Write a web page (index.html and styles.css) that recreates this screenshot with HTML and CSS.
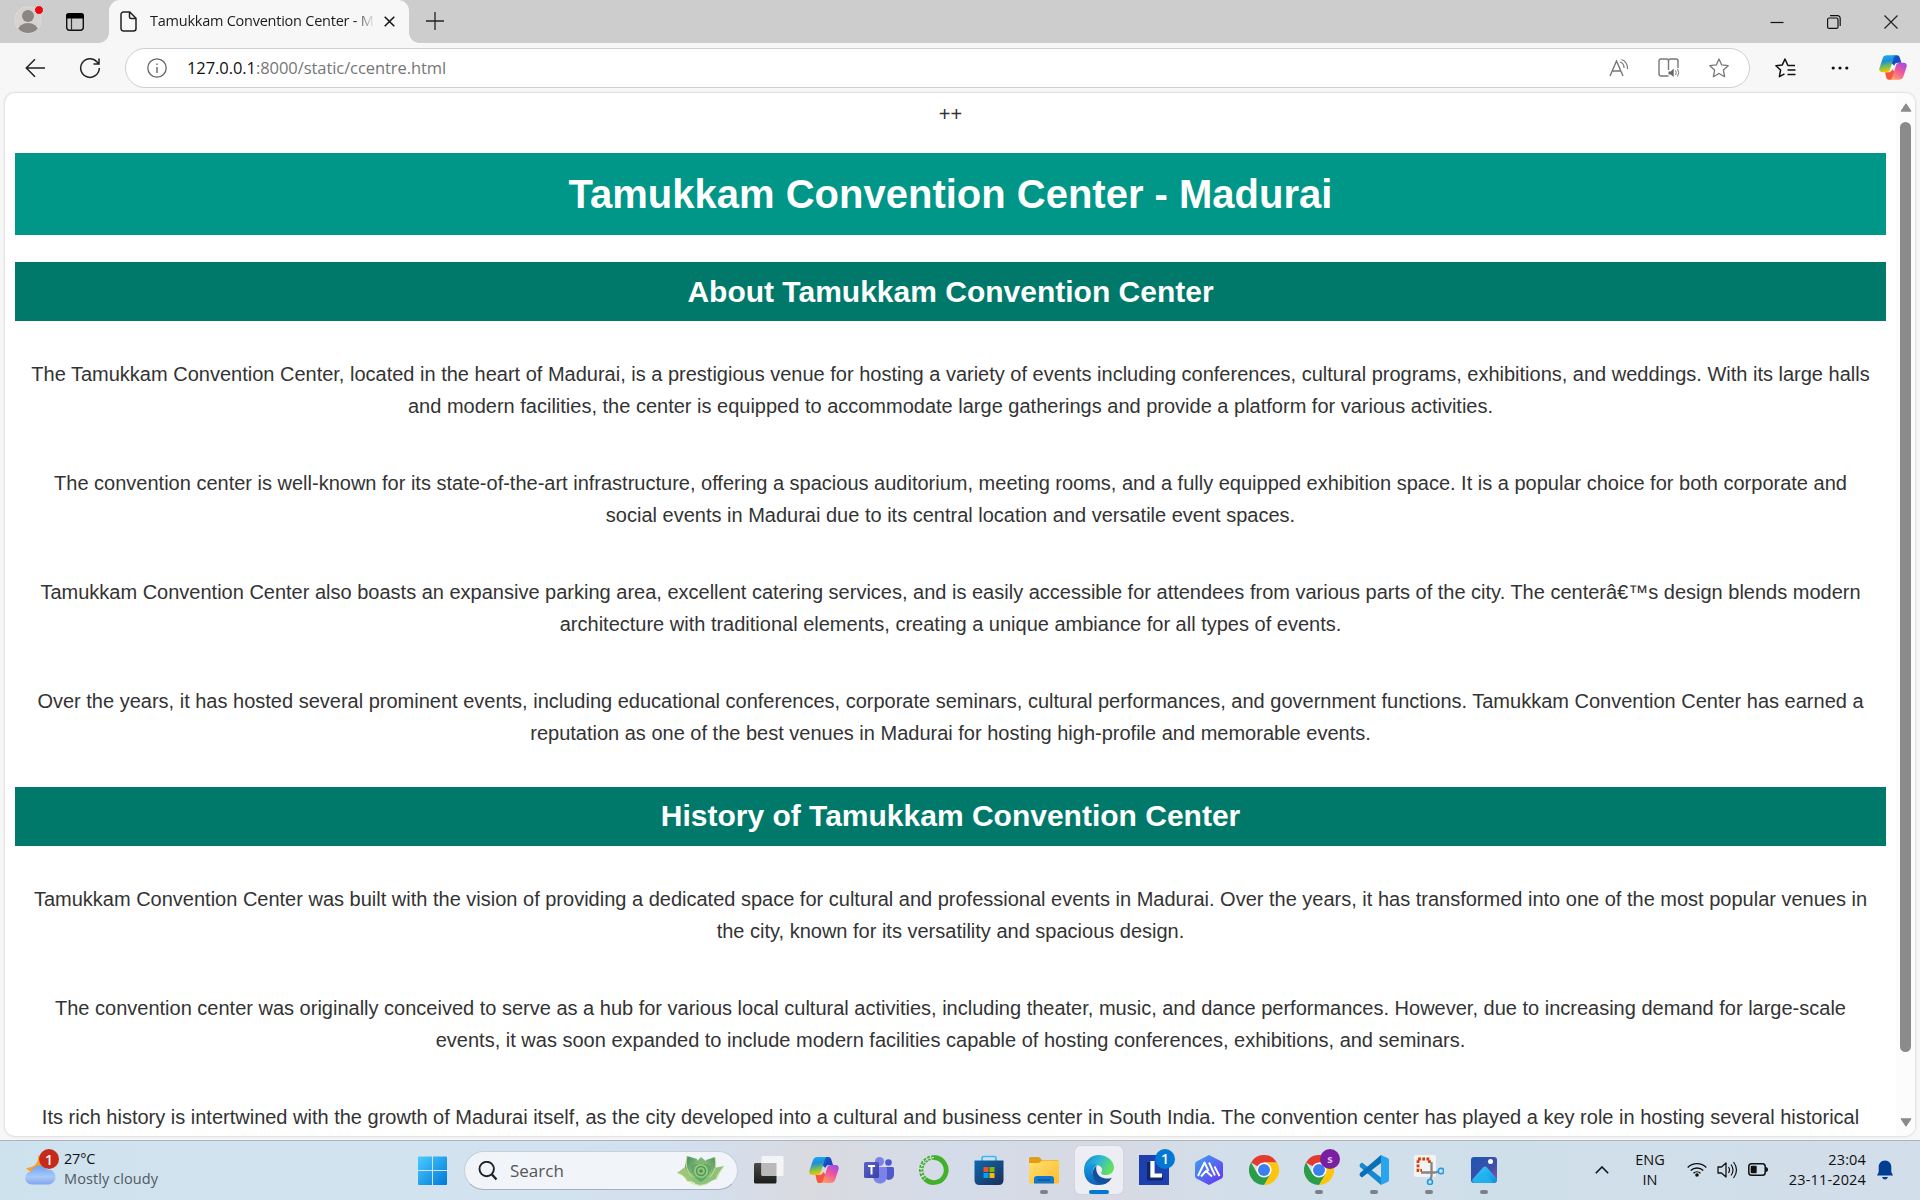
FILE: index.html
```
<!DOCTYPE html>
<html lang="en">
<head>
<meta charset="utf-8">
<title>Tamukkam Convention Center - Madurai</title>
<link rel="stylesheet" href="styles.css">
</head>
<body>
<svg class="defs" width="0" height="0">
  <defs>
    <linearGradient id="cpA" x1="0" y1="0" x2="0.2" y2="1"><stop offset="0" stop-color="#18b4f0"/><stop offset=".4" stop-color="#1f8ddb"/><stop offset=".7" stop-color="#6fbf5a"/><stop offset="1" stop-color="#f5c400"/></linearGradient>
    <linearGradient id="cpB" x1="0.8" y1="0" x2="0.2" y2="1"><stop offset="0" stop-color="#a04be8"/><stop offset=".45" stop-color="#f0559c"/><stop offset="1" stop-color="#ffa366"/></linearGradient>
    <linearGradient id="cpC" x1="0" y1="0" x2="1" y2="1"><stop offset="0" stop-color="#0a62c8"/><stop offset="1" stop-color="#2238c4"/></linearGradient>
    <linearGradient id="win" x1="0" y1="0" x2="1" y2="1"><stop offset="0" stop-color="#4ccbff"/><stop offset="1" stop-color="#0078d7"/></linearGradient>
    <linearGradient id="store" x1="0" y1="0" x2="1" y2="1"><stop offset="0" stop-color="#0b67ae"/><stop offset="1" stop-color="#1e2f5b"/></linearGradient>
    <linearGradient id="folder" x1="0" y1="0" x2="1" y2="1"><stop offset="0" stop-color="#ffdf70"/><stop offset="1" stop-color="#fdbd2c"/></linearGradient>
    <linearGradient id="edgeG" x1="0" y1="0" x2="1" y2=".4"><stop offset="0" stop-color="#1480cc"/><stop offset=".5" stop-color="#2bb5dc"/><stop offset="1" stop-color="#63e060"/></linearGradient>
    <linearGradient id="edgeB" x1="0" y1="0" x2="0" y2="1"><stop offset="0" stop-color="#1b9de2"/><stop offset="1" stop-color="#0d62b8"/></linearGradient>
    <linearGradient id="hex" x1="0" y1="0" x2="1" y2="1"><stop offset="0" stop-color="#3da5f0"/><stop offset="1" stop-color="#6a2ff5"/></linearGradient>
    <linearGradient id="photo" x1="0" y1="0" x2="1" y2="1"><stop offset="0" stop-color="#1c56b5"/><stop offset=".6" stop-color="#3f4fa8"/><stop offset="1" stop-color="#9a4f9e"/></linearGradient>
    <linearGradient id="hill" x1="0" y1="0" x2="1" y2="1"><stop offset="0" stop-color="#3ad2fc"/><stop offset="1" stop-color="#0c8fe0"/></linearGradient>
    <linearGradient id="cloud" x1="0" y1="0" x2="0" y2="1"><stop offset="0" stop-color="#6ea2ee"/><stop offset=".6" stop-color="#a9c9f9"/><stop offset="1" stop-color="#7fa4ee"/></linearGradient>
    <linearGradient id="dark" x1="0" y1="0" x2="0" y2="1"><stop offset="0" stop-color="#4a4a48"/><stop offset="1" stop-color="#1c1c1b"/></linearGradient>
    <linearGradient id="teams" x1="0" y1="0" x2="1" y2="1"><stop offset="0" stop-color="#5a62c9"/><stop offset="1" stop-color="#3b3fa5"/></linearGradient>
    <linearGradient id="leafA" x1="0" y1="0" x2="1" y2="1"><stop offset="0" stop-color="#3f8a58"/><stop offset="1" stop-color="#a5cf85"/></linearGradient>
    <linearGradient id="leafB" x1="1" y1="0" x2="0" y2="1"><stop offset="0" stop-color="#4f9560"/><stop offset="1" stop-color="#a5cf85"/></linearGradient>
    <symbol id="copilot" viewBox="0 0 30 28">
      <path d="M16 1h3.500c1.500 0 2.300 1 2.800 2.600L24 9h-4c-2 0-3 1-3.600 3L13 9z" fill="url(#cpC)"/>
      <path d="M14 27h-3.500c-1.500 0-2.300-1-2.800-2.600L6.500 19h4c2 0 3-1 3.600-3l3 3z" fill="#f4573b"/>
      <path d="M8.500 1H19c-2 0-2.800 1.500-3.400 3.400l-3.800 11.800C11.200 18 10.200 19 8 19H3.500C.8 19-.2 17 .5 14.500l3.300-10C4.500 2.200 6 1 8.500 1z" fill="url(#cpA)"/>
      <path d="M21.500 27H11c2 0 2.800-1.500 3.400-3.400l3.800-11.800C18.800 10 19.800 9 22 9h4.500c2.700 0 3.700 2 3 4.500l-3.300 10c-.7 2.300-2.200 3.500-4.700 3.500z" fill="url(#cpB)"/>
    </symbol>
    <symbol id="chrome" viewBox="0 0 30 30">
      <path d="M15 15 2 7.500A15 15 0 0 1 28 7.500L15 7.500z" fill="#e33b2e"/>
      <path d="M15 15 15 7.500H28A15 15 0 0 1 15 30L21.500 18.700z" fill="#fdc60d"/>
      <path d="M15 15 21.500 18.700 15 30A15 15 0 0 1 2 7.500L8.500 18.700z" fill="#2a9d48"/>
      <circle cx="15" cy="15" r="7.500" fill="#fff"/><circle cx="15" cy="15" r="6" fill="#3a7ff2"/>
    </symbol>
  </defs>
</svg>
<div class="screen">
  <header class="titlebar">
    <div class="lead">
      <svg width="30" height="30" viewBox="0 0 30 30"><defs><clipPath id="av"><circle cx="14" cy="16" r="13"/></clipPath></defs><circle cx="14" cy="16" r="13.300" fill="#d5d2cf" stroke="#dedede" stroke-width=".8"/><g clip-path="url(#av)" fill="#8b8683"><circle cx="14" cy="12" r="6"/><ellipse cx="14" cy="26.500" rx="10" ry="7.500"/></g><circle cx="25" cy="6" r="4.500" fill="#e60c12" stroke="#dedede"/></svg>
      <svg width="20" height="20" viewBox="0 0 20 20"><rect x="1.700" y="1.700" width="16.600" height="16.600" rx="3" fill="none" stroke="#111" stroke-width="1.400"/><path d="M1 6.500V4a3 3 0 0 1 3-3h12a3 3 0 0 1 3 3v2.500z" fill="#000"/><path d="M6.500 6v12" stroke="#333" stroke-width="1.200"/></svg>
    </div>
    <div class="tab">
      <svg width="17" height="21" viewBox="0 0 17 21"><path d="M3.500 1h6.300L16 7.300v10.200a2.500 2.500 0 0 1-2.500 2.500h-10A2.500 2.500 0 0 1 1 17.500v-14A2.500 2.500 0 0 1 3.500 1zM9.500 1v5a1.500 1.500 0 0 0 1.500 1.500h5" fill="none" stroke="#222" stroke-width="1.500"/></svg>
      <span class="tab-title">Tamukkam Convention Center - Madurai</span>
      <svg class="tab-close" width="11" height="11" viewBox="0 0 11 11"><path d="M.7.700l9.600 9.600M10.300.700.700 10.300" stroke="#111" stroke-width="1.500"/></svg>
    </div>
    <svg class="newtab" width="18" height="18" viewBox="0 0 18 18"><path d="M9 0v18M0 9h18" stroke="#222" stroke-width="1.300"/></svg>
    <div class="winctl">
      <svg width="14" height="14" viewBox="0 0 14 14"><path d="M.5 7.500h13" stroke="#111" stroke-width="1.200"/></svg>
      <svg width="14" height="14" viewBox="0 0 14 14"><rect x=".6" y="3" width="10.400" height="10.400" rx="1.500" fill="none" stroke="#111" stroke-width="1.200"/><path d="M3 .7h7.500a2.700 2.700 0 0 1 2.700 2.700V11" fill="none" stroke="#111" stroke-width="1.200"/></svg>
      <svg width="14" height="14" viewBox="0 0 14 14"><path d="M.5.500l13 13M13.500.500l-13 13" stroke="#222" stroke-width="1.200"/></svg>
    </div>
  </header>
  <nav class="toolbar">
    <svg class="back" width="21" height="20" viewBox="0 0 21 20"><path d="M20 10H1.500M10 1.300 1.300 10l8.700 8.700" fill="none" stroke="#222" stroke-width="1.500"/></svg>
    <svg class="reload" width="22" height="22" viewBox="0 0 22 22"><path d="M20.300 11A9.300 9.300 0 1 1 17.800 4.700L20 7M20 1.500V7h-5.500" fill="none" stroke="#222" stroke-width="1.500"/></svg>
    <div class="omnibox">
      <svg width="20" height="20" viewBox="0 0 20 20"><circle cx="10" cy="10" r="9.200" fill="none" stroke="#666" stroke-width="1.300"/><path d="M10 9v6M10 5.500v1.500" stroke="#666" stroke-width="1.400"/></svg>
      <span class="url"><b>127.0.0.1</b>:8000/static/ccentre.html</span>
      <div class="omni-actions">
        <svg width="20" height="20" viewBox="0 0 20 20"><path d="M1 18 7.500 3 14 18M3.200 13h8.600" fill="none" stroke="#777" stroke-width="1.400"/><path d="M11 4a6 6 0 0 1 4 6M12.500 1.500A9 9 0 0 1 18.500 11" fill="none" stroke="#777" stroke-width="1.200"/></svg>
        <svg width="22" height="20" viewBox="0 0 22 20"><path d="M10.500 18H3a2 2 0 0 1-2-2V3a2 2 0 0 1 2-2h5.500a2 2 0 0 1 2 2v9M10.500 3a2 2 0 0 1 2-2H18a2 2 0 0 1 2 2v7" fill="none" stroke="#777" stroke-width="1.400"/><path d="M10.500 13.500h2.200l3-3v8.500l-3-2.500h-2.200z" fill="#666"/><path d="M17.500 12.500q1.500 2 0 4.500M19.500 11q2.500 3.500 0 7.500" fill="none" stroke="#777"/></svg>
        <svg width="20" height="20" viewBox="0 0 20 20"><path d="M10 1 12.700 6.900 19.200 7.700 14.400 12.100 15.600 18.700 10 15.500 4.400 18.700 5.600 12.100.800 7.700 7.300 6.900z" fill="none" stroke="#777" stroke-width="1.300" stroke-linejoin="round"/></svg>
      </div>
    </div>
    <svg class="favs" width="21" height="20" viewBox="0 0 21 20"><path d="M20 7.500H12.900L10 1 7.300 6.900.900 7.700 5.600 12.100 4.400 18.700 9.500 15.800" fill="none" stroke="#111" stroke-width="1.500" stroke-linejoin="round"/><path d="M12.500 12h8M12.500 16.500h8" stroke="#111" stroke-width="1.500"/></svg>
    <svg class="more" width="18" height="4" viewBox="0 0 18 4"><g fill="#111"><circle cx="2.200" cy="2" r="1.600"/><circle cx="9" cy="2" r="1.600"/><circle cx="15.800" cy="2" r="1.600"/></g></svg>
    <svg class="cp" width="28" height="27"><use href="#copilot"/></svg>
  </nav>
  <div class="viewport">
    <main class="page">
      ++
      <h1>Tamukkam Convention Center - Madurai</h1>
      <h2>About Tamukkam Convention Center</h2>
      <p>The Tamukkam Convention Center, located in the heart of Madurai, is a prestigious venue for hosting a variety of events including conferences, cultural programs, exhibitions, and weddings. With its large halls and modern facilities, the center is equipped to accommodate large gatherings and provide a platform for various activities.</p>
      <p>The convention center is well-known for its state-of-the-art infrastructure, offering a spacious auditorium, meeting rooms, and a fully equipped exhibition space. It is a popular choice for both corporate and social events in Madurai due to its central location and versatile event spaces.</p>
      <p>Tamukkam Convention Center also boasts an expansive parking area, excellent catering services, and is easily accessible for attendees from various parts of the city. The centerâ€™s design blends modern architecture with traditional elements, creating a unique ambiance for all types of events.</p>
      <p>Over the years, it has hosted several prominent events, including educational conferences, corporate seminars, cultural performances, and government functions. Tamukkam Convention Center has earned a reputation as one of the best venues in Madurai for hosting high-profile and memorable events.</p>
      <h2>History of Tamukkam Convention Center</h2>
      <p>Tamukkam Convention Center was built with the vision of providing a dedicated space for cultural and professional events in Madurai. Over the years, it has transformed into one of the most popular venues in the city, known for its versatility and spacious design.</p>
      <p>The convention center was originally conceived to serve as a hub for various local cultural activities, including theater, music, and dance performances. However, due to increasing demand for large-scale events, it was soon expanded to include modern facilities capable of hosting conferences, exhibitions, and seminars.</p>
      <p>Its rich history is intertwined with the growth of Madurai itself, as the city developed into a cultural and business center in South India. The convention center has played a key role in hosting several historical</p>
    </main>
    <div class="scrollbar">
      <svg width="12" height="9" viewBox="0 0 12 9"><path d="M6 .8 11 8.200H1z" fill="#8b8b8b" stroke="#8b8b8b" stroke-linejoin="round"/></svg>
      <div class="thumb"></div>
      <svg width="12" height="9" viewBox="0 0 12 9"><path d="M6 8.200 11 .8H1z" fill="#8b8b8b" stroke="#8b8b8b" stroke-linejoin="round"/></svg>
    </div>
  </div>
  <footer class="taskbar">
    <div class="weather">
      <svg width="35" height="37" viewBox="0 0 35 37"><path d="M13 6c1 8-4 13-12 13 4 6 15 6 18 0V10z" fill="#f5a32a"/><path d="M7 35.500a6.500 6.500 0 0 1-.5-13A8.500 8.500 0 0 1 22 20.500a7.500 7.500 0 0 1 2 15z" fill="url(#cloud)"/><circle cx="24" cy="10" r="10" fill="#c42b1c"/><text x="24" y="15.500" text-anchor="middle" class="badge-text">1</text></svg>
      <div class="weather-text"><span>27°C</span><span class="muted">Mostly cloudy</span></div>
    </div>
    <div class="cell start"><svg width="30" height="30" viewBox="0 0 30 30"><path d="M0 1.500Q0 .5 1 .5H14V14H0zM15 .5H28q1 0 1 1V14H15zM0 15H14V29H1q-1 0-1-1zM15 15H29V28q0 1-1 1H15z" fill="url(#win)"/></svg></div>
    <div class="search">
      <svg width="20" height="20" viewBox="0 0 20 20"><circle cx="8.700" cy="8" r="7.200" fill="none" stroke="#222" stroke-width="1.900"/><path d="M13.500 13 18.500 18.500" stroke="#222" stroke-width="2.400"/></svg>
      <span>Search</span>
      <svg class="plant" width="48" height="32" viewBox="0 0 48 32">
        <path d="M0 18 8 12 16 14 18 27 10 26Q7 20 0 18z" fill="#9cc777"/>
        <path d="M47 11 37 13 31 18 32 27 39 24Q41 18 47 11z" fill="#8fc274"/>
        <path d="M10 1 20 4 22 14 13 20 8 12z" fill="url(#leafA)"/>
        <path d="M38 2 29 5 26 14 34 20 39 12z" fill="url(#leafB)"/>
        <path d="M24 2 31 8 28 18H20L18 8z" fill="#7db774"/>
        <path d="M12 19 20 23 30 22 36 18Q36 26 30 29L23 30.500Q14 29 12 19z" fill="#8cc47c"/>
        <path d="M13 10Q14 22 24 27 33 22 35 11L29 9H19z" fill="#66a768"/>
        <circle cx="24" cy="16" r="7" fill="#94cb80"/><circle cx="24" cy="16" r="5.200" fill="#4f9358"/><circle cx="24" cy="16" r="3.800" fill="#8fc97c"/><circle cx="24" cy="16" r="1.800" fill="#4b8f55"/>
        <path d="M0 18Q8 20 10 26L18 28M10 1Q7 13 15 22M38 2Q41 13 33 22M47 11Q42 18 39 25M14 28Q24 33 33 27" stroke="#cfe3a0" stroke-width=".9" fill="none"/>
      </svg>
    </div>
    <div class="apps">
    <div class="cell"><svg width="30" height="30" viewBox="0 0 30 30"><rect x="0" y="8" width="22.500" height="20.500" rx="1.500" fill="url(#dark)"/><rect x="7.500" y="1" width="22" height="20" rx="1.500" fill="#f5f5f5"/><path d="M7.500 8h15v13H9q-1.500 0-1.500-1.500z" fill="#b9b9b9"/></svg></div>
    <div class="cell"><svg width="30" height="28"><use href="#copilot"/></svg></div>
    <div class="cell"><svg width="30" height="30" viewBox="0 0 30 30"><circle cx="24.500" cy="7.500" r="3.300" fill="#5059c9"/><circle cx="15.500" cy="6.500" r="4.500" fill="#7b83eb"/><path d="M22 12h6.500q1.500 0 1.500 1.500V19c0 7-8 7-8 4z" fill="#5059c9"/><path d="M9 12h12.500q1.500 0 1.500 1.500V21c0 10-14 10-14 0z" fill="#7b83eb"/><rect x="0" y="7" width="15" height="16" rx="1.500" fill="url(#teams)"/><path d="M4 11h7M7.500 11v8.500" stroke="#fff" stroke-width="2"/></svg></div>
    <div class="cell"><svg width="30" height="30" viewBox="0 0 30 30"><path d="M15 2.500A12.500 12.500 0 1 1 6 24" fill="none" stroke="#43b02a" stroke-width="4.800"/><path d="M15 2.500A12.500 12.500 0 0 0 6 24" fill="none" stroke="#43b02a" stroke-width="4.400" stroke-dasharray="2.600 1.200"/><path d="M15 2.500A12.500 12.500 0 0 0 6 24" fill="none" stroke="#d9dde3" stroke-width="1.100" stroke-dasharray="2.200 1.400"/></svg></div>
    <div class="cell"><svg width="30" height="30" viewBox="0 0 30 30"><path d="M8 6V3q0-1.500 1.500-1.500h11Q22 1.500 22 3v3" fill="none" stroke="#2cc0f2" stroke-width="1.700"/><path d="M.5 5.500h29V25q0 5-5 5h-19q-5 0-5-5z" fill="url(#store)"/><path d="M9.500 12h5v5h-5z" fill="#f25022"/><path d="M15.500 12h5v5h-5z" fill="#7fba00"/><path d="M9.500 18h5v5h-5z" fill="#00a4ef"/><path d="M15.500 18h5v5h-5z" fill="#ffb900"/></svg></div>
    <div class="cell"><svg width="30" height="30" viewBox="0 0 30 30"><path d="M0 3.500Q0 2 1.500 2H10l3 3h15q1.500 0 1.500 1.500V15H0z" fill="#e09f12"/><path d="M0 8h10l3-2.500h17V27q0 1.500-1.500 1.500h-27Q0 28.500 0 27z" fill="url(#folder)"/><path d="M5 28.500V24q0-3 3-3h14q3 0 3 3v4.500z" fill="#1176cc"/><path d="M9 25h12" stroke="#094f96" stroke-width="1.300"/></svg><i class="run"></i></div>
    <div class="cell active"><svg width="30" height="30" viewBox="0 0 30 30"><path d="M0 15C0 6 7 0 15 0s15 6 15 12.500c0 5-4 7.500-8.500 7.500-3.500 0-5-1.300-4-3 1.500-2.500.5-6-4.500-7C7 8.500 1 10 0 15z" fill="url(#edgeG)"/><path d="M0 15C.5 9 8 7 13.500 10 8 13 7 19 11 24c4 4 9 5 12 3.500-5 3.500-12 3-16 1C2.500 26 0 21 0 15z" fill="url(#edgeB)"/><path d="M12.500 11C7.500 14.500 7 21.500 12 26.500c2.500 2.500 6.500 3.600 9.500 2.200 3-1.400 5-3.500 6.300-6C25 24 20 24 16 21.500c-3-2-4.500-6.500-3.500-10.500z" fill="#10509f"/></svg><i class="run wide"></i></div>
    <div class="cell"><svg width="36" height="36" viewBox="0 0 36 36" class="shift"><path d="M0 6h30v30H0z" fill="#1e3fae"/><path d="M9.500 13v17h13v-3" fill="none" stroke="#112764" stroke-width="3"/><path d="M13.500 12v14.500h9.500" fill="none" stroke="#fff" stroke-width="4.200"/><circle cx="26" cy="10" r="10" fill="#0078d4"/><text x="26" y="15" text-anchor="middle" class="badge-text">1</text></svg></div>
    <div class="cell"><svg width="28" height="30" viewBox="0 0 28 30"><path d="M14 0 26.500 6.500Q28 7.500 28 9v12q0 1.500-1.500 2.500L14 30 1.500 23.500Q0 22.500 0 21V9Q0 7.500 1.500 6.500z" fill="url(#hex)"/><path d="M3 21 9.500 7.500 13.500 16M6 21.500l5-5.500 6 5.500M14 7.500l6 13M19.500 11.500l5 9.500" fill="none" stroke="#fff" stroke-width="1.900" stroke-linejoin="round"/></svg></div>
    <div class="cell"><svg width="30" height="30"><use href="#chrome"/></svg></div>
    <div class="cell"><svg width="36" height="36" viewBox="0 0 36 36" class="shift"><use href="#chrome" x="0" y="6" width="30" height="30"/><circle cx="26" cy="10" r="10" fill="#7b1fa2"/><text x="26" y="14" text-anchor="middle" class="s-text">s</text></svg><i class="run"></i></div>
    <div class="cell"><svg width="30" height="30" viewBox="0 0 30 30"><path d="M1 9 3 7.500 22 22.500V30L1 12q-1-1.500 0-3z" fill="#1689d1"/><path d="M1 21 3 22.500 22 8V0L1 18q-1 1.500 0 3z" fill="#0a6fb5"/><path d="M22 0 29 3.300q1 .6 1 1.700v20q0 1.200-1 1.700L22 30z" fill="#29a5ee"/></svg><i class="run"></i></div>
    <div class="cell"><svg width="30" height="30" viewBox="0 0 30 30"><rect width="22" height="22" rx="2" fill="#f3f3f3"/><path d="M15.500 8V4H4v11.500h4" fill="none" stroke="#d83b01" stroke-width="2.800" stroke-dasharray="2.800 1.400"/><path d="M17.500 7v14l-1 3M7 17.500h14l4-1" fill="none" stroke="#858585" stroke-width="2.300"/><circle cx="27" cy="16" r="2.700" fill="none" stroke="#1f9be6" stroke-width="1.600"/><circle cx="16" cy="27" r="2.500" fill="none" stroke="#1f9be6" stroke-width="1.600"/></svg><i class="run"></i></div>
    <div class="cell"><svg width="26" height="26" viewBox="0 0 26 26"><rect width="26" height="26" rx="3" fill="url(#photo)"/><path d="M1 23 12 10.500q2-2 4 0L26 22q0 4-4 4H4q-2.500 0-3-3z" fill="url(#hill)"/><path d="M2 25 14 14l8 12H4z" fill="#23b5f0" opacity=".6"/><circle cx="19.500" cy="4.500" r="2.500" fill="#fff"/></svg><i class="run"></i></div>
    </div>
    <div class="tray">
      <svg class="chev" width="14" height="8" viewBox="0 0 14 8"><path d="M.8 7.200 7 1l6.200 6.200" fill="none" stroke="#111" stroke-width="1.600"/></svg>
      <div class="lang"><span>ENG</span><span>IN</span></div>
      <svg width="20" height="15" viewBox="0 0 20 15"><g fill="none" stroke="#111" stroke-width="1.400"><path d="M.7 5.500a13 13 0 0 1 18.600 0M3.700 8.500a9 9 0 0 1 12.600 0M6.500 11.300a5 5 0 0 1 7 0"/></g><circle cx="10" cy="13" r="1.800" fill="#111"/></svg>
      <svg width="21" height="18" viewBox="0 0 21 18"><path d="M1 6h3.500L9 2v14l-4.500-4H1z" fill="none" stroke="#111" stroke-width="1.300" stroke-linejoin="round"/><path d="M11.500 6q2 3 0 6M14 3.500q4 5.500 0 11M16.500 1q6 8 0 16" fill="none" stroke="#111" stroke-width="1.200"/></svg>
      <svg width="20" height="13" viewBox="0 0 20 13"><rect x=".8" y=".8" width="16.400" height="11.400" rx="2.800" fill="none" stroke="#111" stroke-width="1.500"/><rect x="2.700" y="2.700" width="6" height="7.600" rx="1" fill="#111"/><path d="M17.500 4q2.500 0 2.500 2.500T17.500 9z" fill="#111"/></svg>
      <div class="clock"><span>23:04</span><span>23-11-2024</span></div>
      <svg width="16" height="20" viewBox="0 0 16 20"><path d="M8 .5c4 0 6.300 3 6.300 6.500v5L16 15.500H0L1.700 12V7C1.700 3.500 4 .5 8 .5zM5 17h6q-1 2.500-3 2.500T5 17z" fill="#003e92"/></svg>
    </div>
  </footer>
</div>
</body>
</html>
```
FILE: styles.css
```
* { box-sizing: border-box; }
body { margin: 0; font-family: "Open Sans", "Noto Sans", sans-serif; color: #111; }
svg { display: block; flex: none; }
.screen { width: 1920px; height: 1200px; display: flex; flex-direction: column; overflow: hidden; background: #f7f7f7; }

/* Tab strip */
.titlebar { height: 43px; display: flex; background: #cdcdcd; }
.lead { width: 109px; display: flex; align-items: center; gap: 21px; padding-left: 14px; }
.lead svg:first-child { margin-top: -5px; }
.tab { position: relative; width: 300px; display: flex; align-items: center; padding-left: 11px; background: #f7f7f7; border-radius: 11px 11px 0 0; }
.tab::before, .tab::after { content: ""; position: absolute; bottom: 0; width: 10px; height: 10px; }
.tab::before { left: -10px; background: radial-gradient(circle at 0 0, #cdcdcd 9.500px, #f7f7f7 10px); }
.tab::after { right: -10px; background: radial-gradient(circle at 100% 0, #cdcdcd 9.500px, #f7f7f7 10px); }
.tab-title { width: 223px; margin-left: 13px; margin-top: -2px; overflow: hidden; white-space: nowrap; font-size: 14.500px; letter-spacing: -.24px; color: #1b1b1b; -webkit-mask-image: linear-gradient(90deg, #000 205px, transparent 225px); mask-image: linear-gradient(90deg, #000 205px, transparent 225px); }
.tab-close { margin-left: 11px; }
.newtab { margin: 12px 0 0 17px; }
.winctl { margin-left: auto; margin-right: 22px; display: flex; align-items: center; gap: 43px; }

/* Address bar */
.toolbar { height: 50px; display: flex; align-items: center; padding-bottom: 1px; }
.back { margin-left: 25px; }
.reload { margin-left: 33px; }
.omnibox { width: 1625px; height: 40px; margin-left: 24px; display: flex; align-items: center; padding-left: 21px; background: #fff; border: 1px solid #cfcfcf; border-radius: 20px; }
.url { margin-left: 20px; font-size: 16.500px; letter-spacing: -.07px; color: #767676; white-space: nowrap; }
.url b { font-weight: 400; color: #111; }
.omni-actions { margin-left: auto; margin-right: 20px; display: flex; gap: 29px; }
.favs { margin-left: 25px; }
.more { margin-left: 35px; }
.cp { margin-left: 30px; }

/* Web page */
.viewport { width: 1910px; height: 1043px; margin-left: 5px; display: flex; background: #fff; border-radius: 10px; overflow: hidden; box-shadow: 0 0 2px 1px #dedede; }
.page { width: 1891px; padding: 10px; text-align: center; color: #333; font-family: "Liberation Sans", Arial, sans-serif; font-size: 20px; line-height: 23px; }
.page h1 { margin: 26.800px 0; padding: 18.750px; background: #009688; color: #fff; font-size: 40px; line-height: 45px; }
.page h2 { margin: 24.900px 0; padding: 12.500px; background: #00796b; color: #fff; font-size: 30px; line-height: 34px; }
.page p { margin: 20px 0; padding: 12.500px; line-height: 32px; }
.scrollbar { width: 19px; display: flex; flex-direction: column; align-items: center; padding: 10px 0 9px; background: #fcfcfc; }
.scrollbar svg:last-child { margin-top: auto; }
.thumb { width: 11px; height: 930px; margin-top: 10px; border-radius: 6px; background: #8b8b8b; }

/* Taskbar */
.taskbar { height: 60px; margin-top: 4px; display: flex; align-items: center; border-top: 1px solid #a9b6c1; background: linear-gradient(90deg, #cee2ed 0, #d2e3ef 500px, #d3dfed 700px, #dadae0 810px, #d4dce9 950px, #d7d9e3 1110px, #d2dfea 1230px, #cfdfea 1500px, #d2deea 1920px); }
.weather { width: 405px; display: flex; padding-left: 25px; margin-top: -3px; }
.weather-text { margin-left: 4px; display: flex; flex-direction: column; font-size: 14.500px; line-height: 20px; letter-spacing: -.2px; }
.muted { color: #4f5a61; letter-spacing: .1px; }
.badge-text { font: 600 14px "Open Sans", sans-serif; fill: #fff; }
.s-text { font: bold 11px "Open Sans", sans-serif; fill: #ddb8ea; }
.apps { display: flex; }
.cell { position: relative; width: 55px; height: 59px; display: flex; align-items: center; justify-content: center; padding: 0 1px 1px 0; }
.start { padding: 0; }
.shift { margin: -6px -6px 0 0; }
.active::before { content: ""; position: absolute; left: 3px; top: 5px; width: 48px; height: 48px; border-radius: 5px; background: #eceef3; box-shadow: 0 0 1px #aaa; }
.active svg { position: relative; }
.run { position: absolute; left: 23px; bottom: 6px; width: 8px; height: 4px; border-radius: 2px; background: #7b8187; }
.run.wide { left: 17px; width: 20px; background: #0078d4; }
.search { width: 274px; height: 39px; margin: 0 4px; display: flex; align-items: center; padding-left: 13px; border-radius: 20px; background: #f1f5fa; border: 1px solid #c4d0dc; border-bottom-color: #a4b0bc; }
.search span { margin-left: 12px; font-size: 17px; color: #555; }
.plant { margin-left: auto; margin-right: 12px; }
.tray { flex: 1; display: flex; align-items: center; justify-content: flex-end; padding: 0 27px 2px 0; }
.lang { width: 40px; margin: 0 17px 0 21px; display: flex; flex-direction: column; align-items: center; font-size: 14.500px; line-height: 20px; }
.tray > svg + svg { margin-left: 10px; }
.clock { width: 98px; margin-right: 11px; display: flex; flex-direction: column; align-items: flex-end; font-size: 14.500px; line-height: 20px; white-space: nowrap; letter-spacing: .15px; }
```
